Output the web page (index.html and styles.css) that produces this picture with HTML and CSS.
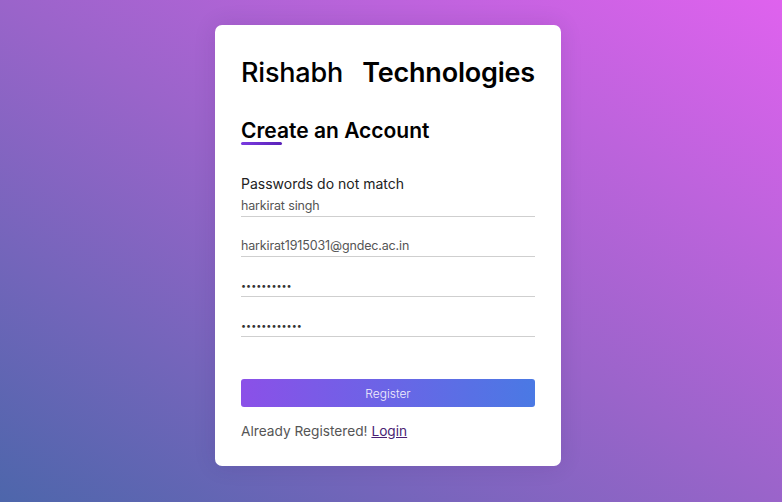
FILE: index.html
```html
<!DOCTYPE html>
<html lang="en">
<head>
<meta charset="utf-8">
<title>Create an Account</title>
<link rel="stylesheet" href="styles.css">
</head>
<body>
<main class="page">
  <section class="card">
    <h1 class="brand"><span class="brand-light">Rishabh</span><span class="brand-strong">Technologies</span></h1>
    <h2 class="heading">Create an Account</h2>
    <div class="heading-bar"></div>
    <form class="form">
      <p class="error">Passwords do not match</p>
      <input class="field" type="text" value="harkirat singh">
      <input class="field" type="email" value="harkirat1915031@gndec.ac.in">
      <input class="field field-pass" type="password" value="abcdefghij">
      <input class="field field-pass" type="password" value="abcdefghijkl">
      <button class="btn" type="button">Register</button>
      <p class="foot">Already Registered! <a class="link" href="#">Login</a></p>
    </form>
  </section>
</main>
</body>
</html>
```
FILE: styles.css
```css
html, body {
  margin: 0;
  padding: 0;
  height: 100%;
}
body {
  font-family: "Inter", "Open Sans", sans-serif;
  background: linear-gradient(to top right, #4d66ab 0%, #9a64ca 50%, #df62ee 100%);
}
.page {
  display: flex;
  justify-content: center;
  padding-top: 25px;
  padding-right: 6px;
}
.card {
  width: 346px;
  box-sizing: border-box;
  background: #fff;
  border-radius: 7px;
  padding: 31px 26px 25px;
  box-shadow: 0 0 22px rgba(40, 20, 80, 0.12);
}
.brand {
  margin: 0;
  display: flex;
  justify-content: space-between;
  font-size: 27px;
  line-height: 34px;
  color: #000;
  letter-spacing: -0.2px;
}
.brand-light { font-weight: 500; }
.brand-strong { font-weight: 600; }
.heading {
  margin: 30px 0 0;
  font-size: 21px;
  line-height: 22px;
  font-weight: 600;
  color: #000;
}
.heading-bar {
  width: 41px;
  height: 3px;
  border-radius: 2px;
  background: linear-gradient(to right, #7a3ae0, #5a22b8);
}
.form {
  display: flex;
  flex-direction: column;
  margin: 0;
}
.error {
  margin: 29px 0 0;
  font-size: 14px;
  line-height: 20px;
  color: #222;
}
.field {
  display: block;
  width: 100%;
  height: 23px;
  box-sizing: border-box;
  border: none;
  border-bottom: 1px solid #cfcfcf;
  padding: 0;
  font-family: inherit;
  font-size: 12.5px;
  letter-spacing: -0.15px;
  color: #555;
  outline: none;
  background: transparent;
}
.field-pass {
  font-size: 9px;
  letter-spacing: 0;
  color: #333;
}
.field + .field { margin-top: 17px; }
.btn {
  margin-top: 42px;
  height: 28px;
  width: 100%;
  border: none;
  border-radius: 3px;
  background: linear-gradient(to right, #8b50e8, #4a79e4);
  color: #f2eefc;
  font-family: inherit;
  font-size: 12px;
  font-weight: 300;
  cursor: pointer;
}
.foot {
  margin: 14px 0 0;
  font-size: 13.7px;
  line-height: 20px;
  color: #555;
}
.link {
  color: #4a1f74;
  text-decoration: underline;
}
```
